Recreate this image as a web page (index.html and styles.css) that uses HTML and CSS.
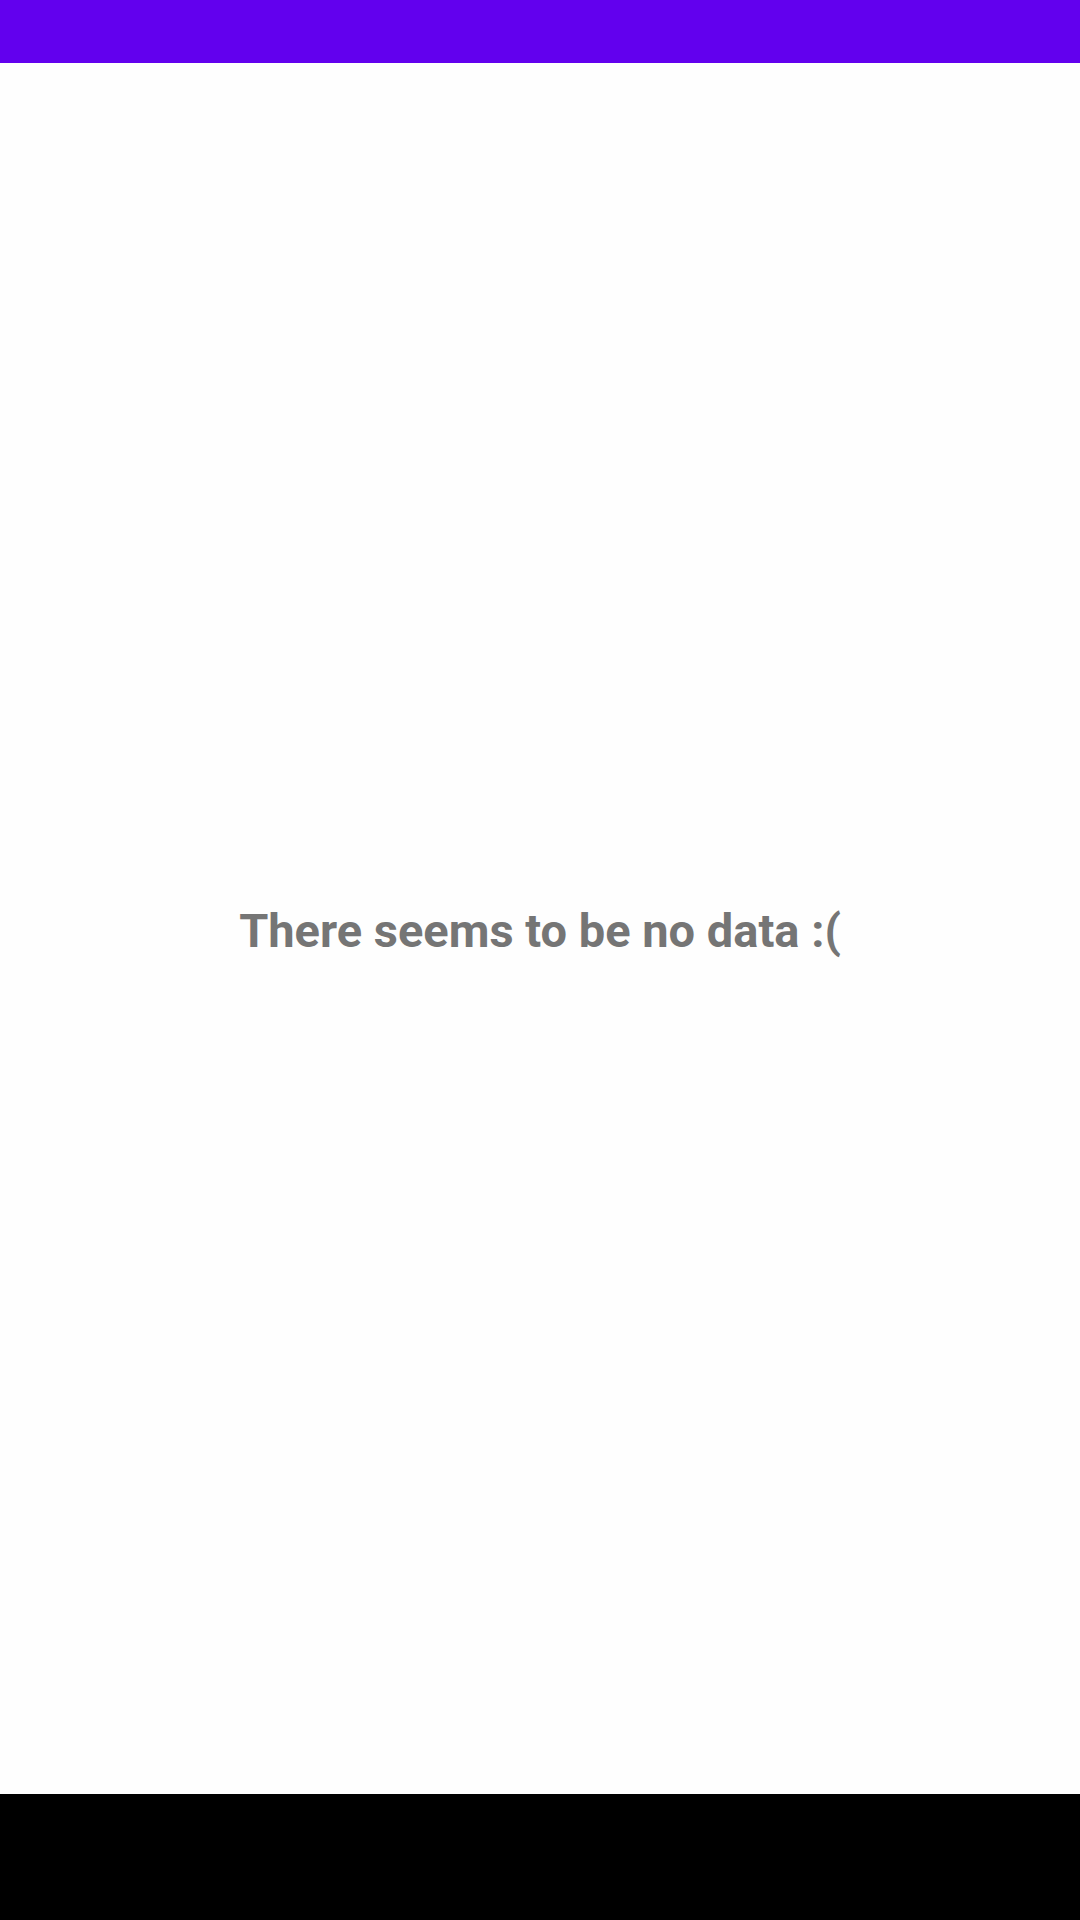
FILE: index.html
```html
<!DOCTYPE html>
<html>
<head>
<meta charset="utf-8">
<link rel="stylesheet" href="styles.css">
</head>
<body>
<div class="screen">
  <div class="status-bar"></div>
  <main class="content">
    <p class="empty">There seems to be no data :(</p>
  </main>
  <div class="nav-bar"></div>
</div>
</body>
</html>
```
FILE: styles.css
```css
html, body {
  margin: 0;
  padding: 0;
  background: #ffffff;
}
.screen {
  width: 1080px;
  height: 1920px;
  display: flex;
  flex-direction: column;
}
.status-bar {
  height: 63px;
  background: #6200ee;
  flex: none;
}
.content {
  flex: 1;
  display: flex;
  align-items: center;
  justify-content: center;
  background: #fefefe;
}
.empty {
  margin: 0;
  padding-top: 4px;
  font-family: Roboto, "Liberation Sans", sans-serif;
  font-weight: 700;
  font-size: 47px;
  line-height: 56px;
  color: #757575;
}
.nav-bar {
  height: 126px;
  background: #000000;
  flex: none;
}
```
